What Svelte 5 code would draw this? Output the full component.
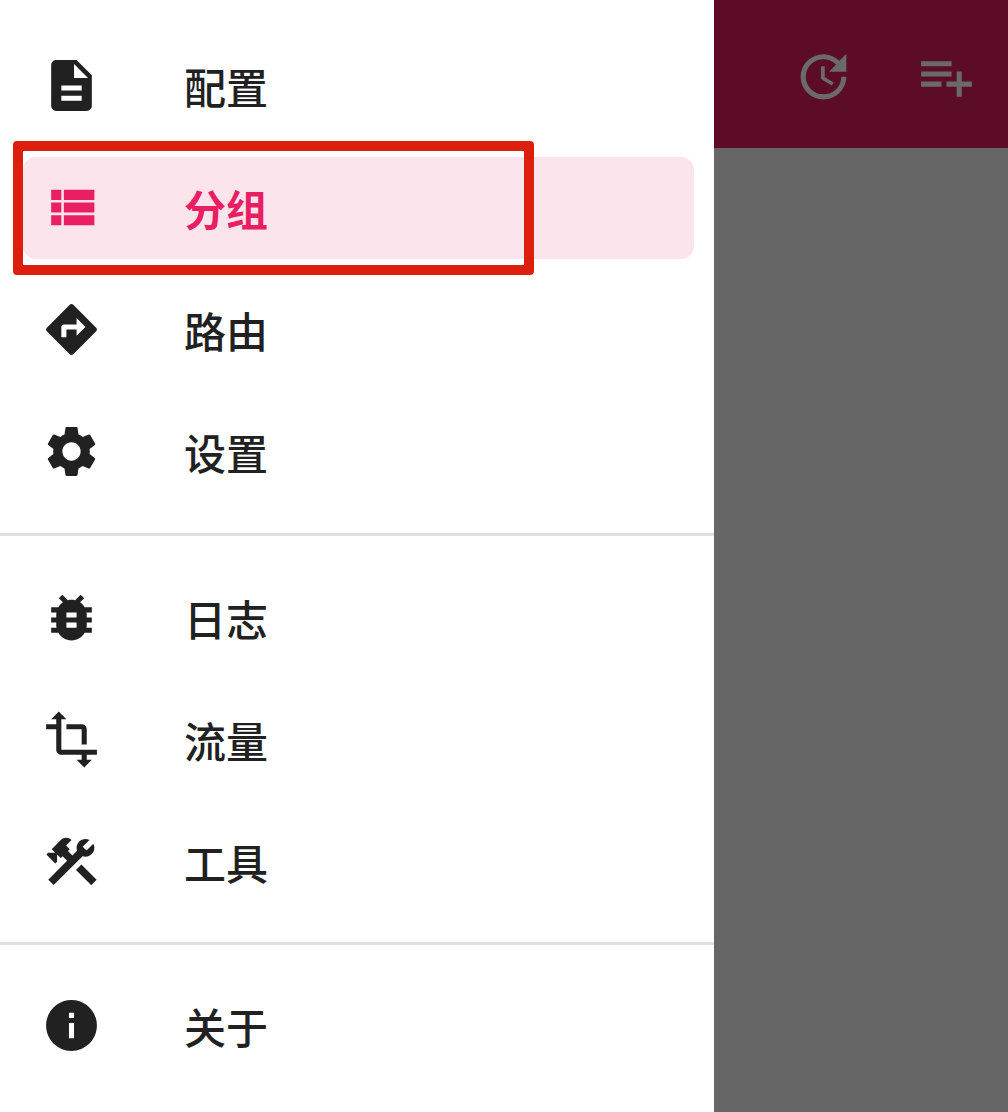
<script>
    const sections = [
        [
            { label: "配置", icon: "M14 2H6c-1.1 0-1.99.9-1.99 2L4 20c0 1.1.89 2 1.99 2H18c1.1 0 2-.9 2-2V8l-6-6zm2 16H8v-2h8v2zm0-4H8v-2h8v2zm-3-5V3.5L18.5 9H13z" },
            { label: "分组", active: true, icon: "M4 14h4v-4H4v4zm0 5h4v-4H4v4zM4 9h4V5H4v4zm5 5h12v-4H9v4zm0 5h12v-4H9v4zM9 5v4h12V5H9z" },
            { label: "路由", icon: "M21.71 11.29l-9-9c-.39-.39-1.02-.39-1.41 0l-9 9c-.39.39-.39 1.02 0 1.41l9 9c.39.39 1.02.39 1.41 0l9-9c.39-.38.39-1.01 0-1.41zM14 14.5V12h-4v3H8v-4c0-.55.45-1 1-1h5V7.5l3.5 3.5-3.5 3.5z" },
            { label: "设置", icon: "M19.14 12.94c.04-.3.06-.61.06-.94 0-.32-.02-.64-.07-.94l2.03-1.58c.18-.14.23-.41.12-.61l-1.92-3.32c-.12-.22-.37-.29-.59-.22l-2.39.96c-.5-.38-1.03-.7-1.62-.94l-.36-2.54c-.04-.24-.24-.41-.48-.41h-3.84c-.24 0-.43.17-.47.41l-.36 2.54c-.59.24-1.13.57-1.62.94l-2.39-.96c-.22-.08-.47 0-.59.22L2.74 8.87c-.12.21-.08.47.12.61l2.03 1.58c-.05.3-.09.63-.09.94s.02.64.07.94l-2.03 1.58c-.18.14-.23.41-.12.61l1.92 3.32c.12.22.37.29.59.22l2.39-.96c.5.38 1.03.7 1.62.94l.36 2.54c.05.24.24.41.48.41h3.84c.24 0 .44-.17.47-.41l.36-2.54c.59-.24 1.13-.56 1.62-.94l2.39.96c.22.08.47 0 .59-.22l1.92-3.32c.12-.22.07-.47-.12-.61l-2.01-1.58zM12 15.6c-1.98 0-3.6-1.62-3.6-3.6s1.62-3.6 3.6-3.6 3.6 1.62 3.6 3.6-1.62 3.6-3.6 3.6z" },
        ],
        [
            { label: "日志", icon: "M20 8h-2.81c-.45-.78-1.07-1.45-1.82-1.96L17 4.41 15.59 3l-2.17 2.17C12.96 5.06 12.49 5 12 5c-.49 0-.96.06-1.41.17L8.41 3 7 4.41l1.62 1.63C7.88 6.55 7.26 7.22 6.81 8H4v2h2.09c-.05.33-.09.66-.09 1v1H4v2h2v1c0 .34.04.67.09 1H4v2h2.81c1.04 1.79 2.97 3 5.19 3s4.15-1.21 5.19-3H20v-2h-2.09c.05-.33.09-.66.09-1v-1h2v-2h-2v-1c0-.34-.04-.67-.09-1H20V8zm-6 8h-4v-2h4v2zm0-4h-4v-2h4v2z" },
            { label: "流量", icon: "M22 18v-2H8V4h2L7 1 4 4h2v2H2v2h4v8c0 1.1.9 2 2 2h8v2h-2l3 3 3-3h-2v-2h4zM10 8h6v6h2V8c0-1.1-.9-2-2-2h-6v2z" },
            { label: "工具", icon: "M13.78 15.3L19.78 21.3L21.89 19.14L15.89 13.14L13.78 15.3ZM17.5 10.1C17.11 10.1 16.69 10.05 16.36 9.91L4.97 21.25L2.86 19.14L10.27 11.74L8.5 9.96L7.78 10.66L6.33 9.25V12.11L5.63 12.81L2.11 9.25L2.81 8.55H5.62L4.22 7.14L7.78 3.58C8.95 2.41 10.83 2.41 12 3.58L9.89 5.74L11.3 7.14L10.59 7.85L12.38 9.63L14.2 7.75C14.06 7.42 14 7 14 6.63C14 4.66 15.56 3.11 17.5 3.11C18.09 3.11 18.61 3.25 19.08 3.53L16.41 6.2L17.91 7.7L20.58 5.03C20.86 5.5 21 6 21 6.63C21 8.59 19.45 10.1 17.5 10.1Z" },
        ],
        [
            { label: "关于", icon: "M12 2C6.48 2 2 6.48 2 12s4.48 10 10 10 10-4.48 10-10S17.52 2 12 2zm1 15h-2v-6h2v6zm0-8h-2V7h2v2z" },
        ],
    ];

    const actions = [
        "M21 10.12h-6.78l2.74-2.82c-2.73-2.7-7.15-2.8-9.88-.1-2.73 2.71-2.73 7.08 0 9.79s7.15 2.71 9.88 0C18.32 15.65 19 14.08 19 12.1h2c0 1.98-.88 4.55-2.64 6.29-3.51 3.48-9.21 3.48-12.72 0-3.5-3.47-3.53-9.11-.02-12.58s9.14-3.47 12.65 0L21 3v7.12zM12.5 8v4.25l3.5 2.08-.72 1.21L11 13V8h1.5z",
        "M14 10H2v2h12v-2zm0-4H2v2h12V6zm4 8v-4h-2v4h-4v2h4v4h2v-4h4v-2h-4zM2 16h8v-2H2v2z",
    ];
</script>

<div class="screen">
    <nav class="drawer">
        {#each sections as items}
            <div class="section">
                {#each items as item}
                    <div class="item" class:active={item.active}>
                        <svg class="icon" viewBox="0 0 24 24"><path d={item.icon} /></svg>
                        <span class="label">{item.label}</span>
                    </div>
                {/each}
            </div>
        {/each}
        <div class="marker"></div>
    </nav>

    <div class="main">
        <header class="appbar">
            {#each actions as d}
                <div class="action">
                    <svg class="icon" viewBox="0 0 24 24"><path {d} /></svg>
                </div>
            {/each}
        </header>
    </div>
</div>

<style>
    :global(body) {
        margin: 0;
    }

    .screen {
        display: flex;
        width: 1008px;
        height: 1112px;
        overflow: hidden;
        font-family: "Noto Sans CJK SC", "Noto Sans", sans-serif;
    }

    .drawer {
        position: relative;
        width: 714px;
        flex-shrink: 0;
        background: #fff;
    }

    .section {
        display: flex;
        flex-direction: column;
        gap: 20px;
        padding: 30px 20px 30px 23px;
        border-bottom: 3px solid #e0e0e0;
    }

    .section:first-child {
        padding-top: 35px;
    }

    .section:nth-child(2) {
        padding-top: 31px;
        padding-bottom: 29px;
    }

    .section:nth-child(3) {
        border-bottom: none;
    }

    .item {
        display: flex;
        align-items: center;
        height: 102px;
        padding-left: 18px;
        border-radius: 13px;
        color: #212121;
    }

    .item .icon {
        margin-top: -2px;
        fill: #212121;
    }

    .item.active {
        background: #fce4ec;
        color: #e91e63;
    }

    .item.active .icon {
        fill: #e91e63;
    }

    .icon {
        display: block;
        width: 61px;
        height: 61px;
    }

    .label {
        margin-left: 82px;
        font-size: 42px;
        line-height: 48px;
        font-weight: 500;
    }

    .active .label {
        font-weight: 700;
    }

    .marker {
        position: absolute;
        left: 13px;
        top: 141px;
        width: 501px;
        height: 114px;
        border: 10px solid #dd200d;
        border-radius: 4px;
    }

    .main {
        flex: 1;
        background: #666;
    }

    .appbar {
        display: flex;
        justify-content: flex-end;
        gap: 1px;
        height: 148px;
        padding-right: 1px;
        box-sizing: border-box;
        background: #5d0c28;
    }

    .action {
        display: flex;
        align-items: center;
        justify-content: center;
        width: 122px;
        height: 152px;
    }

    .action .icon {
        fill: #6a6a6a;
    }
</style>
